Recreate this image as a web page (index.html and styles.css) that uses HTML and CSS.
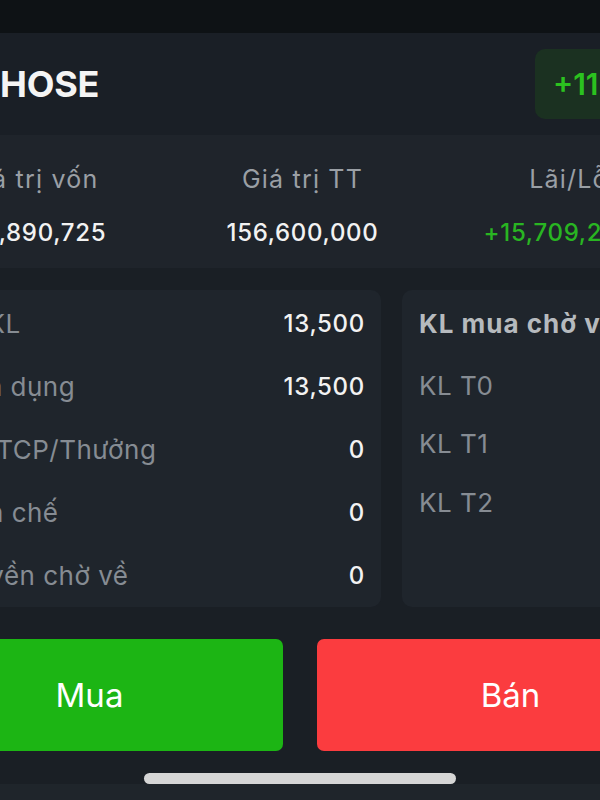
FILE: index.html
```html
<!DOCTYPE html>
<html>
    <head>
        <title>Chi tiết danh mục</title>
        <meta name="viewport" content="width=device-width, initial-scale=1">
        <link rel="stylesheet" href="styles.css">
    </head>

    <body>
        <div id="screen">
            <div class="status"></div>

            <div id="top">
                <h1>HOSE</h1>
                <div class="badge">+11.15%</div>
            </div>

            <div id="stats">
                <div class="stat left">
                    <div class="label">Giá trị vốn</div>
                    <div class="value">140,890,725</div>
                </div>
                <div class="stat mid">
                    <div class="label">Giá trị TT</div>
                    <div class="value">156,600,000</div>
                </div>
                <div class="stat right">
                    <div class="label">Lãi/Lỗ
                        <svg class="info" viewBox="0 0 20 20" width="14" height="14">
                            <circle cx="10" cy="10" r="8.5" fill="none" stroke="#9a9fa5" stroke-width="1.5"/>
                            <rect x="9.2" y="8.5" width="1.6" height="6" fill="#9a9fa5"/>
                            <circle cx="10" cy="6" r="1" fill="#9a9fa5"/>
                        </svg>
                    </div>
                    <div class="value up">+15,709,275</div>
                </div>
            </div>

            <div id="cards">
                <div class="card main">
                    <div class="row"><span class="label">Tổng KL</span><span class="value">13,500</span></div>
                    <div class="row"><span class="label">KL khả dụng</span><span class="value">13,500</span></div>
                    <div class="row"><span class="label">KL cổ TCP/Thưởng</span><span class="value">0</span></div>
                    <div class="row"><span class="label">KL hạn chế</span><span class="value">0</span></div>
                    <div class="row"><span class="label">KL quyền chờ về</span><span class="value">0</span></div>
                </div>
                <div class="card side">
                    <div class="card-title">KL mua chờ về</div>
                    <div class="row"><span class="label">KL T0</span></div>
                    <div class="row"><span class="label">KL T1</span></div>
                    <div class="row"><span class="label">KL T2</span></div>
                </div>
            </div>

            <div id="actions">
                <button class="buy">Mua</button>
                <button class="sell">Bán</button>
            </div>

            <div class="home"><span class="pill"></span></div>
            <div class="bottom"></div>
        </div>
    </body>
</html>
```

FILE: styles.css
```css
html, body {
    margin: 0;
    padding: 0;
    overflow: hidden;
    background-color: #1a1f25;
    font-family: Inter, "Noto Sans", sans-serif;
    color: #f2f2f2;
}

/* the app screen is wider than the crop, so it hangs over both sides */
#screen {
    width: 808px;
    margin-left: -104px;
    display: flex;
    flex-direction: column;
}

.status {
    height: 33px;
    background-color: #0e1215;
}

#top {
    height: 102px;
    display: flex;
    align-items: center;
    justify-content: space-between;
    padding: 0 16px 0 104px;
    background-color: #1a1f26;
}

h1 {
    margin: 0;
    font-size: 36px;
    font-weight: 700;
    color: #f4f4f4;
    letter-spacing: -0.2px;
}

.badge {
    height: 70px;
    width: 153px;
    box-sizing: border-box;
    padding: 0 18px;
    display: flex;
    align-items: center;
    border-radius: 10px;
    background-color: #1b3121;
    color: #2bc21f;
    font-size: 30px;
    font-weight: 600;
}

#stats {
    height: 133px;
    box-sizing: border-box;
    padding: 29px 72px 0 77px;
    display: grid;
    grid-template-columns: 1fr 1fr 1fr;
    background-color: #1f242b;
}

.stat .label {
    font-size: 25px;
    line-height: 30px;
    letter-spacing: 1.2px;
    color: #9a9fa5;
}

.stat .value {
    margin-top: 24px;
    font-size: 24px;
    line-height: 30px;
    font-weight: 500;
    letter-spacing: 0.7px;
}

.stat.left {
    margin-left: -17px;
}

.stat.left .label {
    padding-left: 9px;
}

.stat.mid {
    text-align: center;
}

.stat.right {
    text-align: right;
}

.info {
    margin-left: 1px;
    vertical-align: 0;
}

.up {
    color: #29b522;
}

#cards {
    height: 317px;
    margin-top: 22px;
    padding-left: 6px;
    display: flex;
    gap: 21px;
}

.card {
    width: 479px;
    flex-shrink: 0;
    box-sizing: border-box;
    border-radius: 10px;
    background-color: #1f252c;
    padding: 0 16px 0 14px;
}

.card .row {
    display: flex;
    align-items: center;
    justify-content: space-between;
}

.card.main {
    padding-top: 2px;
}

.card.main .row {
    height: 63px;
}

.card.side .row {
    height: 58.5px;
}

.card.side {
    padding-left: 17px;
}

.card-title {
    height: 66px;
    display: flex;
    align-items: center;
    font-size: 26px;
    font-weight: 700;
    letter-spacing: 1px;
    color: #b6babe;
}

.card .label {
    font-size: 26px;
    letter-spacing: 0.5px;
    color: #868c93;
}

.card .value {
    font-size: 24px;
    font-weight: 500;
    letter-spacing: 0.7px;
}

#actions {
    height: 112px;
    margin-top: 32px;
    display: flex;
    gap: 34px;
}

button {
    flex: 1;
    border: none;
    border-radius: 7px;
    font-family: Inter, "Noto Sans", sans-serif;
    font-size: 33px;
    color: #ffffff;
    cursor: pointer;
}

.buy {
    background-color: #1cb514;
}

.sell {
    background-color: #fb3c3f;
}

.home {
    height: 33px;
    display: flex;
    align-items: flex-end;
    justify-content: center;
}

.pill {
    width: 312px;
    height: 11px;
    border-radius: 6px;
    background-color: #d6d6d6;
}

.bottom {
    height: 16px;
    background-color: #1f252b;
}
```
